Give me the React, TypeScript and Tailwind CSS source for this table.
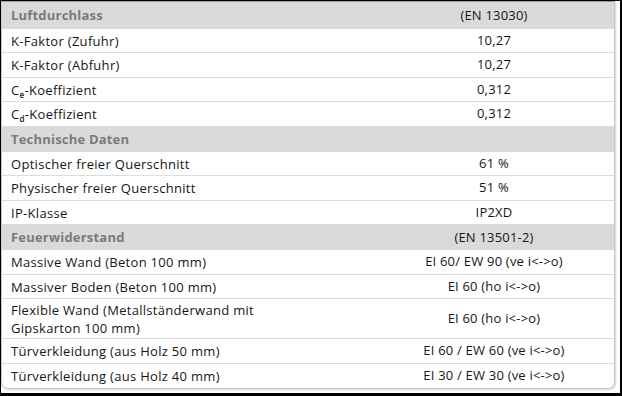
import React from "react";

type Row =
  | { kind: "h"; label: string; value: string; h: number }
  | { kind: "r"; label: React.ReactNode; value: string; h: number };

const rows: Row[] = [
  { kind: "h", label: "Luftdurchlass", value: "(EN 13030)", h: 27 },
  { kind: "r", label: "K-Faktor (Zufuhr)", value: "10,27", h: 24 },
  { kind: "r", label: "K-Faktor (Abfuhr)", value: "10,27", h: 25 },
  {
    kind: "r",
    label: (
      <>
        C<sub className="text-[8px] font-semibold relative top-[3px] align-baseline">e</sub>-Koeffizient
      </>
    ),
    value: "0,312",
    h: 24,
  },
  {
    kind: "r",
    label: (
      <>
        C<sub className="text-[8px] font-semibold relative top-[3px] align-baseline">d</sub>-Koeffizient
      </>
    ),
    value: "0,312",
    h: 25,
  },
  { kind: "h", label: "Technische Daten", value: "", h: 25 },
  { kind: "r", label: "Optischer freier Querschnitt", value: "61 %", h: 24 },
  { kind: "r", label: "Physischer freier Querschnitt", value: "51 %", h: 25 },
  { kind: "r", label: "IP-Klasse", value: "IP2XD", h: 24 },
  { kind: "h", label: "Feuerwiderstand", value: "(EN 13501-2)", h: 25 },
  { kind: "r", label: "Massive Wand (Beton 100 mm)", value: "EI 60/ EW 90 (ve i<->o)", h: 25 },
  { kind: "r", label: "Massiver Boden (Beton 100 mm)", value: "EI 60 (ho i<->o)", h: 24 },
  {
    kind: "r",
    label: (
      <>
        Flexible Wand (Metallständerwand mit
        <br />
        Gipskarton 100 mm)
      </>
    ),
    value: "EI 60 (ho i<->o)",
    h: 40,
  },
  { kind: "r", label: "Türverkleidung (aus Holz 50 mm)", value: "EI 60 / EW 60 (ve i<->o)", h: 25 },
  { kind: "r", label: "Türverkleidung (aus Holz 40 mm)", value: "EI 30 / EW 30 (ve i<->o)", h: 24 },
];

export default function App() {
  return (
    <div
      className="w-[622px] h-[396px] bg-white border-t-[1px] border-l-[1px] border-r-[2px] border-b-[3px] border-black overflow-hidden"
      style={{ fontFamily: '"Open Sans", "DejaVu Sans", sans-serif' }}
    >
      <div className="w-[614px] border border-[#c8c8c8] border-t-[#9a9a9a] rounded-b-[7px] overflow-hidden shadow-[1px_1px_2px_rgba(0,0,0,0.18)] text-[13px] text-[#161616]">
        {rows.map((r, i) => {
          const last = i === rows.length - 1;
          if (r.kind === "h") {
            return (
              <div
                key={i}
                className="grid grid-cols-[372px_1fr] items-center bg-[#dadada] font-bold text-[#7b7b7b]"
                style={{ height: r.h }}
              >
                <div className="pl-[9px] tracking-[0.2px]">{r.label}</div>
                <div className="text-center font-normal text-[#161616] tracking-[0.2px]">{r.value}</div>
              </div>
            );
          }
          return (
            <div
              key={i}
              className={`grid grid-cols-[372px_1fr] items-center ${last ? "" : "border-b border-[#dcdcdc]"}`}
              style={{ height: r.h }}
            >
              <div className="pl-[9px] leading-[18px] tracking-[0.3px]">{r.label}</div>
              <div className="text-center tracking-[0.2px]">{r.value}</div>
            </div>
          );
        })}
      </div>
    </div>
  );
}
